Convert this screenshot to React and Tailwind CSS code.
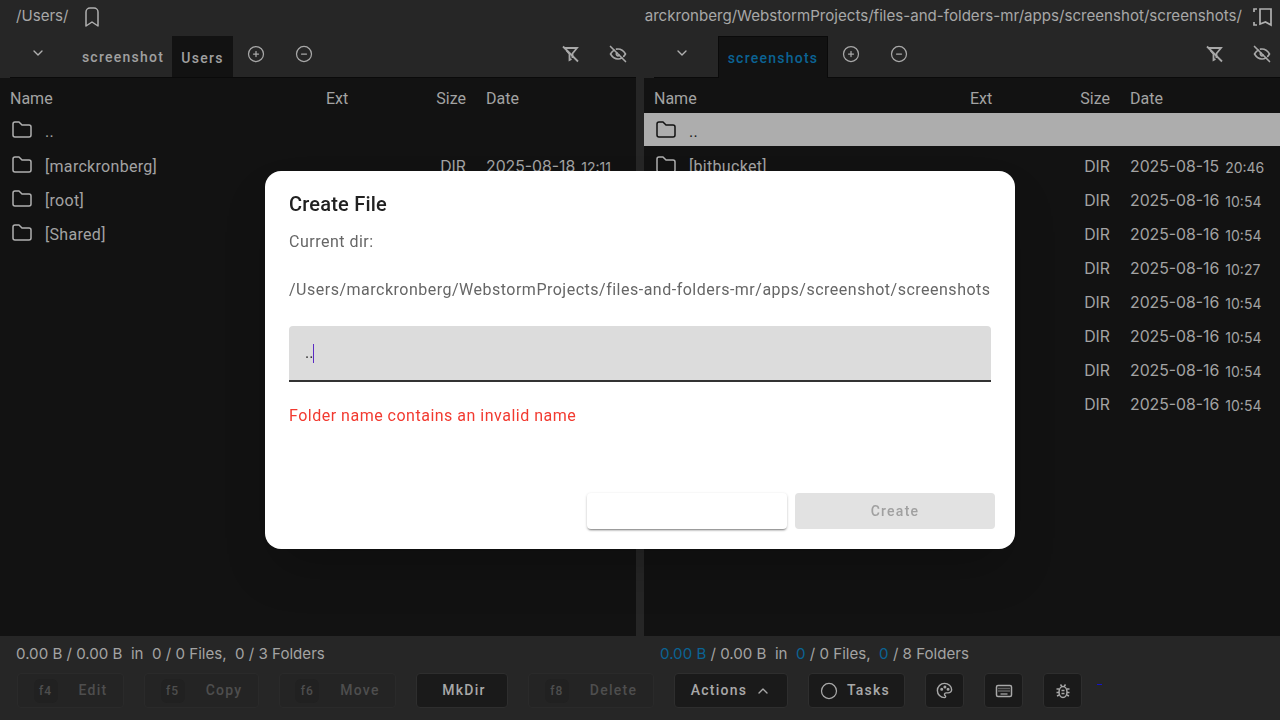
import React from "react";
import {
  TbBookmark,
  TbChevronDown,
  TbChevronUp,
  TbCircle,
  TbCircleMinus,
  TbCirclePlus,
  TbEyeOff,
  TbFolder,
  TbPalette,
} from "react-icons/tb";

const leftRows = [
  { name: "..", up: true },
  { name: "[marckronberg]", date: "2025-08-18", time: "12:11" },
  { name: "[root]" },
  { name: "[Shared]" },
];

const rightRows = [
  { name: "..", up: true },
  { name: "[bitbucket]", date: "2025-08-15", time: "20:46" },
  { name: "", date: "2025-08-16", time: "10:54" },
  { name: "", date: "2025-08-16", time: "10:54" },
  { name: "", date: "2025-08-16", time: "10:27" },
  { name: "", date: "2025-08-16", time: "10:54" },
  { name: "", date: "2025-08-16", time: "10:54" },
  { name: "", date: "2025-08-16", time: "10:54" },
  { name: "", date: "2025-08-16", time: "10:54" },
];

function DashedBookmark() {
  return (
    <svg width="22" height="22" viewBox="0 0 22 22" fill="none" stroke="currentColor" strokeWidth="1.7">
      <path d="M8 3h11v16l-5.5-3-5.5 2z" />
      <path d="M5 3H2v3" />
      <path d="M2 16v3h3" />
    </svg>
  );
}

function FilterOff() {
  return (
    <svg width="20" height="20" viewBox="0 0 20 20" fill="none" stroke="currentColor" strokeWidth="1.8">
      <path d="M4 4h13l-4.5 5.5V14" />
      <path d="M6.5 6.5 9.5 10v6l2-1" />
      <path d="M3 2.5 18 17.5" />
    </svg>
  );
}

function KeyboardIcon() {
  return (
    <svg width="18" height="18" viewBox="0 0 18 18" fill="none" stroke="currentColor">
      <rect x="1.5" y="3.5" width="15" height="11" rx="1.5" strokeWidth="1.5" />
      <path d="M3.5 6.5h11M3.5 9h11" strokeWidth="1.4" strokeDasharray="1 1" />
      <path d="M5.5 12h7" strokeWidth="1.3" />
    </svg>
  );
}

function BugIcon() {
  return (
    <svg width="18" height="18" viewBox="0 0 18 18" fill="none" stroke="currentColor" strokeWidth="1.5">
      <ellipse cx="9" cy="10" rx="4" ry="5.5" />
      <path d="M6.5 2.5 8 4.6M11.5 2.5 10 4.6" />
      <path d="M2.5 7h2.5M13 7h2.5M2.5 10.5H5M13 10.5h2.5M3 14l2.2-1M15 14l-2.2-1" />
      <path d="M7.5 8.5h3M7.5 11.5h3" />
    </svg>
  );
}

function Row({ row, active, first }) {
  return (
    <div
      className={`flex items-center pl-[10px] ${first ? "mb-[2px] h-[33px]" : "h-[34px]"} ${
        active ? "bg-[#adadad] text-[#1c1c1c]" : "text-[#a3a3a3]"
      }`}
    >
      <TbFolder className={`h-[24px] w-[24px] shrink-0 ${active ? "text-[#111111]" : "text-[#b0b0b0]"}`} strokeWidth={1.5} />
      <span className="ml-[11px] w-[281px] translate-y-[2px] font-['Roboto',sans-serif] text-[16px] tracking-[0.3px]">{row.name}</span>
      {row.date && (
        <>
          <span className="ml-[110px] w-[30px] translate-y-[2px] text-right font-['Inter',sans-serif] text-[15.8px]">DIR</span>
          <span className="ml-[20px] translate-y-[2px] font-['Inter',sans-serif] text-[15.8px]">{row.date}</span>
          <span className="ml-[6px] translate-y-[2px] font-['Inter',sans-serif] text-[14px]">{row.time}</span>
        </>
      )}
    </div>
  );
}

function Pane({ path, pathEnd, tabs, rows, active, activeRow }) {
  return (
    <div className="flex min-w-0 flex-1 flex-col">
      <div className={`flex h-[36px] items-center pb-[3px] pr-[6px] ${active ? "" : "pl-[16px]"}`}>
        <div className={`min-w-0 overflow-hidden whitespace-nowrap font-['Inter',sans-serif] text-[15.1px] text-[#a8a8a8] ${active ? "flex flex-1 justify-end" : ""}`}>
          {path}
        </div>
        {pathEnd}
      </div>
      <div className="h-[42px] bg-[#262626] pl-[10px]">
        <div className="flex h-full items-center border-b border-[#0a0a0a]">
          <div className="flex h-full w-[62px] items-center pb-[7px] pl-[20px]">
            <TbChevronDown className="h-[16px] w-[16px] text-[#b0b0b0]" />
          </div>
          <div className={`flex h-full items-end ${active ? "ml-[2px]" : ""}`}>{tabs}</div>
          <div className="flex h-full items-center gap-[26px] pb-[6px] pl-[13px]">
            <TbCirclePlus className="h-[20px] w-[20px] text-[#a8a8a8]" strokeWidth={1.5} />
            <TbCircleMinus className="h-[24px] w-[24px] p-[2px] text-[#a8a8a8]" strokeWidth={1.5} />
          </div>
          <div className="ml-auto flex h-full items-center gap-[28px] pb-[6px] pr-[8px] text-[#a8a8a8]">
            <FilterOff />
            <TbEyeOff className="h-[20px] w-[20px]" strokeWidth={2} />
          </div>
        </div>
      </div>
      <div className="flex-1 overflow-hidden bg-[#121212]">
        <div className="flex h-[35px] items-center pl-[10px] pt-[6px] font-['Roboto',sans-serif] text-[16px] text-[#a3a3a3]">
          <span className="w-[316px]">Name</span>
          <span className="w-[110px]">Ext</span>
          <span className="w-[30px] text-right">Size</span>
          <span className="ml-[20px]">Date</span>
        </div>
        {rows.map((row, i) => (
          <Row key={i} row={row} first={i === 0} active={activeRow === i} />
        ))}
      </div>
    </div>
  );
}

function Tab({ children, current, active }) {
  const tone = active
    ? "-mb-px h-[42px] w-[110px] border border-b-0 border-[#0a0a0a] bg-[#121212] pt-[2px] text-[#0b6394]"
    : current
      ? "h-[41px] w-[61px] bg-[#121212] pt-[3px] text-[#a0a0a0]"
      : "h-[41px] w-[100px] pl-[2px] pt-[2px] text-[#a0a0a0]";
  return (
    <div className={`flex items-center justify-center font-['Roboto',sans-serif] text-[14px] font-medium tracking-[1.25px] ${tone}`}>
      {children}
    </div>
  );
}

function ToolButton({ label, fkey, width, muted, className = "", children }) {
  return (
    <div
      style={{ width }}
      className={`flex h-[35px] items-center justify-center rounded-[4px] border font-['Roboto',sans-serif] text-[14px] font-medium tracking-[1.25px] ${
        muted ? "border-[#2a2a2a] bg-[#242424] text-[#4e4e4e]" : "border-[#2e2e2e] bg-[#1a1a1a] text-[#a8a8a8]"
      } ${className}`}
    >
      {fkey && (
        <span className="mr-[21px] flex h-[24px] w-[24px] items-center justify-center rounded-[6px] bg-[#212121] text-[12px] tracking-[1px]">
          {fkey}
        </span>
      )}
      {children}
      {label}
    </div>
  );
}

function Dialog() {
  return (
    <div className="fixed inset-0 flex items-center justify-center">
      <div className="flex h-[378px] w-[750px] flex-col rounded-2xl bg-white pl-[24px] pr-[24px] font-['Roboto',sans-serif] shadow-2xl">
        <h2 className="pt-[20px] text-[20px] font-medium leading-[26px] tracking-[0.2px] text-[#212121]">Create File</h2>
        <p className="mt-[13px] text-[16px] leading-[24px] tracking-[0.5px] text-[#666666]">Current dir:</p>
        <p className="mt-[24px] whitespace-nowrap text-[16px] leading-[24px] tracking-[0.5px] text-[#666666]">
          /Users/marckronberg/WebstormProjects/files-and-folders-mr/apps/screenshot/screenshots
        </p>
        <div className="mt-[24px] flex h-[56px] items-center rounded-t-[4px] border-b-2 border-[#333333] bg-[#dcdcdc] pl-[16px] text-[16px] text-[#333333]">
          <span>..</span>
          <span className="h-[19px] w-px bg-[#5b2bc4]" />
        </div>
        <p className="mt-[22px] text-[16px] leading-[24px] tracking-[0.5px] text-[#f23a30]">
          Folder name contains an invalid name
        </p>
        <div className="mt-auto flex justify-end gap-[8px] pb-[20px]">
          <div className="h-[36px] w-[200px] rounded-[4px] bg-white shadow-[0_1px_3px_rgba(0,0,0,0.2),0_2px_2px_-1px_rgba(0,0,0,0.4)]" />
          <div className="-mr-[4px] flex h-[36px] w-[200px] items-center justify-center rounded-[4px] bg-[#e2e2e2] text-[14px] font-medium tracking-[1.25px] text-[#a0a0a0]">
            Create
          </div>
        </div>
      </div>
    </div>
  );
}

export default function App() {
  return (
    <div className="relative flex h-screen w-full flex-col overflow-hidden bg-[#262626]">
      <div className="flex min-h-0 flex-1 gap-[8px]">
        <Pane
          path="/Users/"
          pathEnd={<TbBookmark className="ml-[11px] h-[24px] w-[24px] text-[#b0b0b0]" strokeWidth={1.5} />}
          tabs={
            <>
              <Tab>screenshot</Tab>
              <Tab current>Users</Tab>
            </>
          }
          rows={leftRows}
        />
        <Pane
          active
          activeRow={0}
          path="/Users/marckronberg/WebstormProjects/files-and-folders-mr/apps/screenshot/screenshots/"
          pathEnd={
            <span className="ml-[10px] text-[#b0b0b0]">
              <DashedBookmark />
            </span>
          }
          tabs={
            <Tab current active>
              screenshots
            </Tab>
          }
          rows={rightRows}
        />
      </div>
      <div className="h-[84px] shrink-0">
        <div className="flex h-[37px] items-center gap-[8px] pb-[1px] font-['Inter',sans-serif] text-[15.1px] text-[#a3a3a3]">
          <div className="w-[636px] whitespace-pre pl-[16px]">0.00 B / 0.00 B  in  0 / 0 Files,  0 / 3 Folders</div>
          <div className="whitespace-pre pl-[16px]">
            <span className="text-[#0b6394]">0.00 B</span> / 0.00 B  in  <span className="text-[#0b6394]">0</span> / 0 Files,  <span className="text-[#0b6394]">0</span> / 8 Folders
          </div>
        </div>
        <div className="flex items-center gap-[20px] pl-[17px]">
          <ToolButton muted fkey="f4" label="Edit" width={107} />
          <ToolButton muted fkey="f5" label="Copy" width={115} />
          <ToolButton muted fkey="f6" label="Move" width={117} />
          <ToolButton label="MkDir" width={92} className="pl-[4px]" />
          <ToolButton muted fkey="f8" label="Delete" width={126} />
          <ToolButton width={114}>
            Actions
            <TbChevronUp className="ml-[8px] h-[16px] w-[16px]" />
          </ToolButton>
          <ToolButton width={97} className="pr-[4px]">
            <TbCircle className="mr-[8px] h-[20px] w-[20px]" strokeWidth={1.5} />
            Tasks
          </ToolButton>
          <ToolButton width={39}>
            <TbPalette className="h-[19px] w-[19px]" strokeWidth={1.8} />
          </ToolButton>
          <ToolButton width={39}>
            <KeyboardIcon />
          </ToolButton>
          <ToolButton width={39}>
            <BugIcon />
          </ToolButton>
          <span className="-ml-[5px] mb-[12px] h-px w-[5px] shrink-0 bg-[#1414c8]" />
        </div>
      </div>
      <Dialog />
    </div>
  );
}
